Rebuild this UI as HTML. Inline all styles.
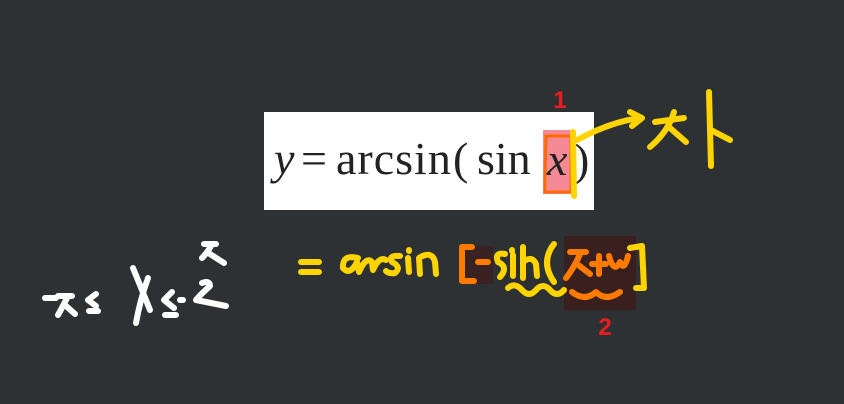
<!DOCTYPE html>
<html><head><style>
body{margin:0;width:844px;height:404px;background:#2d3134;overflow:hidden;position:relative}
.box{position:absolute;left:264px;top:112px;width:330px;height:98px;background:#fff}
.t{position:absolute;top:133px;font:46px/52px "Liberation Serif",serif;color:#222;white-space:pre}
svg{position:absolute;left:0;top:0}
</style></head><body>
<div class="box"></div>
<div class="t" style="left:274px"><i>y</i></div>
<div class="t" style="left:301px">=</div>
<div class="t" style="left:336px;letter-spacing:1px">arcsin</div>
<div class="t" style="left:453px">(</div>
<div class="t" style="left:477px">sin</div>
<svg width="844" height="404" viewBox="0 0 844 404">
<rect x="543" y="130" width="32" height="64" fill="#f26b7a" opacity="0.8"/>
<text x="547" y="175" font-family="Liberation Serif,serif" font-style="italic" font-size="46" fill="#222">x</text>
<text x="574" y="175" font-family="Liberation Serif,serif" font-size="46" fill="#222">)</text>
<path d="M545 175 V192 H571 V136 H546 Z" fill="none" stroke="#ff6a00" stroke-width="3"/>
<rect x="460" y="246" width="33" height="38" fill="#3a2222"/>
<rect x="564" y="236" width="72" height="74" fill="#3a1f1f"/>
<text x="560" y="108" font-family="Liberation Sans,sans-serif" font-weight="bold" font-size="24" fill="#ee1c1c" text-anchor="middle">1</text>
<text x="605" y="335" font-family="Liberation Sans,sans-serif" font-weight="bold" font-size="24" fill="#ee1c1c" text-anchor="middle">2</text>
<g fill="none" stroke="#ffd400" stroke-width="6" stroke-linecap="round" stroke-linejoin="round">
<path d="M577 140 Q610 122 640 118"/><path d="M630 112 L642 118 L632 126"/>
<path d="M655 122 L684 118 M674 112 Q668 132 650 147 M670 128 L686 142"/>
<path d="M709 92 L711 166 M711 130 L730 140"/>
<path d="M573 132 L574 196"/>
<path d="M301 262 H319 M301 272 H319"/>
<path d="M358 258 Q342 254 343 268 Q350 276 357 262 L359 272 Q366 256 372 262 L373 270 Q379 256 386 260"/>
<path d="M400 256 Q388 255 392 262 Q402 267 395 273 Q389 274 386 271"/>
<path d="M408 258 L409 272 M409 250 L409 251"/>
<path d="M420 274 L419 258 Q432 250 435 262 L436 274"/>
<path d="M505 254 Q494 252 498 262 Q509 267 500 277"/>
<path d="M513 255 L513 276 M512 250 V251"/>
<path d="M523 247 L523 278 M523 262 Q532 255 536 264 L537 276"/>
<path d="M554 244 Q540 262 554 282"/>
<path d="M630 248 L642 246 L644 288 L636 288"/>
<path d="M508 288 Q515 282 522 290 Q529 298 536 290 Q543 282 550 290 Q557 298 564 290"/>
</g>
<g fill="none" stroke="#ff7a00" stroke-width="6" stroke-linecap="round" stroke-linejoin="round">
<path d="M472 247 L462 247 L462 281 L474 281 M478 262 L488 262"/>
<path d="M570 252 H586 M581 252 Q574 268 566 278 M577 264 L590 274"/>
<path d="M592 264 H606 M599 256 V274"/>
<path d="M609 256 Q614 274 620 262 Q624 272 628 256"/>
<path d="M572 292 Q585 302 596 292 Q606 302 620 292"/>
</g>
<g fill="none" stroke="#fff" stroke-width="6" stroke-linecap="round" stroke-linejoin="round">
<path d="M45 298 H56"/>
<path d="M58 296 H72 M68 296 Q62 308 58 315 M66 306 L75 314"/>
<path d="M96 294 L88 300 L96 306 M89 311 H98"/>
<path d="M133 268 Q140 285 150 310 M148 278 Q140 300 136 323"/>
<path d="M172 292 L164 300 L174 308 M165 315 H176"/>
<path d="M180 300 L183 300"/>
<path d="M202 283 Q210 280 210 286 Q200 295 196 300 L226 306"/>
<path d="M204 244 H216 M212 244 Q208 252 202 258 M210 254 L224 263"/>
</g>
</svg>
</body></html>
